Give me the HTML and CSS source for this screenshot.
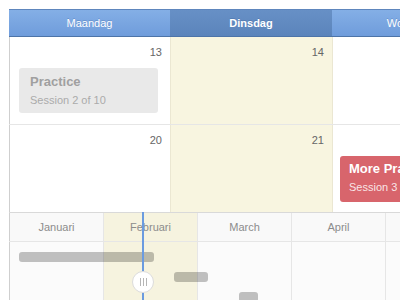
FILE: index.html
```html
<!DOCTYPE html>
<html>
<head>
<meta charset="utf-8">
<link rel="stylesheet" href="styles.css">
</head>
<body>
<div class="app">
  <div class="head">
    <div class="hcell">Maandag</div>
    <div class="hcell today">Dinsdag</div>
    <div class="hcell">Woensdag</div>
  </div>
  <div class="week">
    <div class="cell">
      <div class="num">13</div>
      <div class="event muted">
        <div class="ev-title">Practice</div>
        <div class="ev-sub">Session 2 of 10</div>
      </div>
    </div>
    <div class="cell today"><div class="num">14</div></div>
    <div class="cell"></div>
  </div>
  <div class="week last">
    <div class="cell"><div class="num">20</div></div>
    <div class="cell today"><div class="num">21</div></div>
    <div class="cell narrow">
      <div class="num-space"></div>
      <div class="event red">
        <div class="ev-title">More Practice</div>
        <div class="ev-sub">Session 3 of 10</div>
      </div>
    </div>
  </div>
  <div class="timeline">
    <div class="months">
      <div class="mcell">Januari</div>
      <div class="mcell cur">Februari</div>
      <div class="mcell">March</div>
      <div class="mcell">April</div>
      <div class="mcell">Mei</div>
    </div>
    <div class="lanes">
      <div class="lane"></div>
      <div class="lane cur"></div>
      <div class="lane"></div>
      <div class="lane"></div>
      <div class="lane"></div>
    </div>
    <div class="bar b1"></div>
    <div class="bar b2"></div>
    <div class="bar b3"></div>
    <div class="now"></div>
    <div class="handle"><span></span><span></span><span></span></div>
  </div>
</div>
</body>
</html>
```

FILE: styles.css
```css
html, body {
  margin: 0;
  padding: 0;
  background: #ffffff;
  overflow: hidden;
}
body {
  font-family: "Liberation Sans", Arial, sans-serif;
  width: 400px;
  height: 300px;
}
.app {
  margin: 9px 0 0 9px;
  width: 620px;
}
.head {
  display: grid;
  grid-template-columns: 161px 162px 162px;
  height: 28px;
  box-sizing: border-box;
  border-top: 1px solid #5e86bd;
  border-bottom: 1px solid #4d74a8;
}
.hcell {
  display: flex;
  align-items: center;
  justify-content: center;
  color: #ffffff;
  font-size: 11px;
  background: linear-gradient(#84afe6, #6f9cdb);
  text-shadow: 0 -1px 0 rgba(40, 80, 140, 0.25);
}
.hcell.today {
  background: linear-gradient(#6790c6, #5b84bb);
  font-weight: bold;
}
.week {
  display: grid;
  grid-template-columns: 161px 162px 162px;
  height: 88px;
  box-sizing: border-box;
  border-bottom: 1px solid #e6e6e6;
}
.week.last {
  height: 87px;
  border-bottom: 0;
}
.cell {
  border-left: 1px solid #ebe7d2;
  padding: 8px 8px 0 9px;
  box-sizing: border-box;
}
.cell.narrow {
  padding-left: 7px;
}
.cell:first-child {
  border-left-color: #cfcfcf;
}
.cell.today {
  background: #f8f5e0;
}
.num {
  text-align: right;
  font-size: 11px;
  line-height: 14px;
  color: #666666;
}
.num-space {
  height: 14px;
}
.event {
  margin-top: 9px;
  height: 45px;
  box-sizing: border-box;
  border-radius: 3px;
  padding: 6px 11px;
  white-space: nowrap;
}
.event.muted {
  background: #e9e9e9;
  color: #a0a0a0;
  margin-right: 4px;
}
.event.muted .ev-sub {
  color: #ababab;
}
.event.red {
  background: #d8656c;
  color: #ffffff;
  width: 150px;
  height: 46px;
  padding: 5px 9px;
}
.event.red .ev-sub {
  color: rgba(255, 255, 255, 0.85);
}
.ev-title {
  font-size: 13px;
  font-weight: bold;
  line-height: 16px;
}
.ev-sub {
  font-size: 11px;
  line-height: 14px;
  margin-top: 3px;
}
.timeline {
  position: relative;
  border-top: 1px solid #d9d9d9;
  height: 100px;
}
.months, .lanes {
  display: grid;
  grid-template-columns: repeat(5, 94px);
}
.months {
  height: 29px;
  box-sizing: border-box;
  border-bottom: 1px solid #e6e6e6;
}
.mcell {
  display: flex;
  align-items: center;
  justify-content: center;
  font-size: 11px;
  color: #8c8c8c;
  background: #f9f9f9;
  border-left: 1px solid #e6e6e6;
}
.mcell:first-child, .lane:first-child {
  border-left-color: #cfcfcf;
}
.mcell.cur {
  background: #f6f3df;
}
.lanes {
  height: 80px;
}
.lane {
  background: #fbfbfb;
  border-left: 1px solid #e6e6e6;
}
.lane.cur {
  background: #f6f3df;
}
.bar {
  position: absolute;
  height: 10px;
  border-radius: 3px;
  background: rgba(0, 0, 0, 0.24);
}
.b1 { left: 10px; top: 39px; width: 135px; }
.b2 { left: 165px; top: 59px; width: 34px; }
.b3 { left: 230px; top: 79px; width: 19px; }
.now {
  position: absolute;
  left: 133px;
  top: -1px;
  width: 2px;
  height: 100px;
  background: #6b9be0;
}
.handle {
  position: absolute;
  left: 123px;
  top: 58px;
  width: 22px;
  height: 22px;
  box-sizing: border-box;
  border-radius: 50%;
  background: #ffffff;
  border: 1px solid #dcdcdc;
  display: flex;
  align-items: center;
  justify-content: center;
  gap: 2px;
}
.handle span {
  width: 1px;
  height: 8px;
  background: #b5b5b5;
}
```
